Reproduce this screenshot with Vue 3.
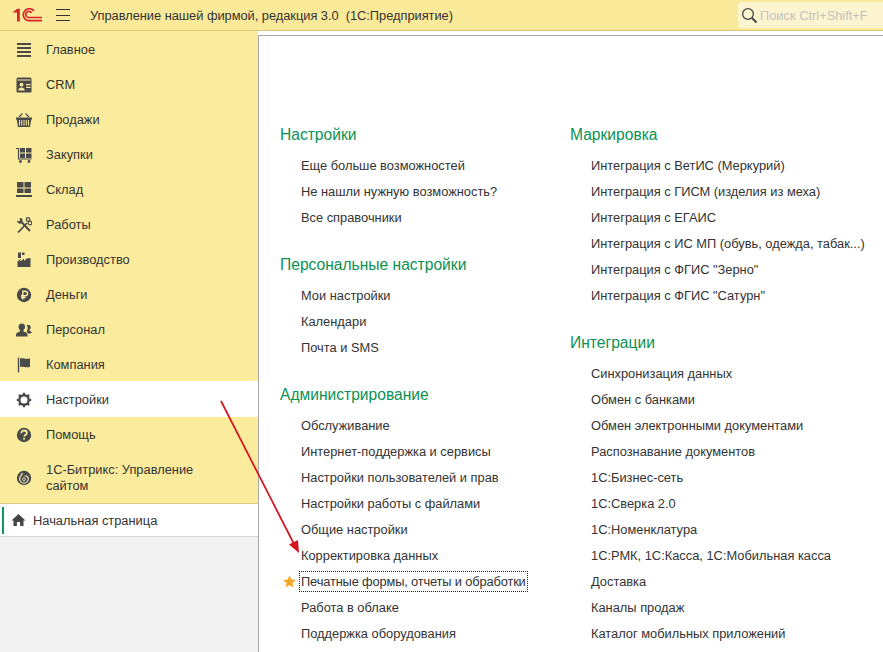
<template>
  <div class="app">
    <header class="topbar">
      <svg class="logo" width="29" height="14" viewBox="0 0 29 14">
        <path d="M0 4 L4.300 .8 H6.800 V13.500 H4 V4.500 H0 Z" fill="#d8232a" />
        <path d="M21 3 A6 6 0 1 0 15.500 12.700 H29" fill="none" stroke="#d8232a" stroke-width="1.700" />
        <path d="M18.500 4.800 A3.100 3.100 0 1 0 15.500 9.500 H29" fill="none" stroke="#d8232a" stroke-width="1.700" />
      </svg>
      <div class="burger"><span></span><span></span><span></span></div>
      <div class="title">Управление нашей фирмой, редакция 3.0&nbsp; (1С:Предприятие)</div>
      <div class="search">
        <svg width="17" height="17" viewBox="0 0 17 17">
          <circle cx="7" cy="7" r="5.400" fill="none" stroke="#444" stroke-width="1.300" />
          <path d="M11 11 L15.500 15.500" stroke="#444" stroke-width="2" />
        </svg>
        <span>Поиск Ctrl+Shift+F</span>
      </div>
    </header>

    <div class="body">
      <aside class="side">
        <nav class="nav">
          <div v-for="item in navItems" :key="item.name" class="nav-item" :class="{ active: item.active, tall: item.tall }">
            <svg class="nav-icon" width="16" height="16" viewBox="0 0 16 16" fill="#4a4a4a" v-html="item.icon"></svg>
            <span class="nav-text">{{ item.name }}</span>
          </div>
        </nav>
        <div class="home-tab">
          <i class="marker"></i>
          <svg width="15" height="12" viewBox="0 0 14 12" fill="#444">
            <path d="M7 0 L14 6.400 H12 V12 H8.600 V8 H5.400 V12 H2 V6.400 H0 Z" />
          </svg>
          <span>Начальная страница</span>
        </div>
      </aside>

      <main class="content">
        <div v-for="(col, i) in columns" :key="i" class="col">
          <section v-for="sec in col" :key="sec.title" class="sec">
            <h2>{{ sec.title }}</h2>
            <div v-for="link in sec.links" :key="link" class="link">
              <svg v-if="link === favorite" class="star" width="13" height="13" viewBox="0 0 13 13">
                <path d="M6.500 .3 L8.300 4.500 L12.900 4.900 L9.400 7.900 L10.500 12.400 L6.500 10 L2.500 12.400 L3.600 7.900 L.1 4.900 L4.700 4.500 Z" fill="#f6a623" />
              </svg>
              <span :class="{ focused: link === favorite }">{{ link }}</span>
            </div>
          </section>
        </div>
      </main>
    </div>

    <svg class="arrow" width="883" height="652" viewBox="0 0 883 652">
      <path d="M221 401 L294 544" stroke="#d5121e" stroke-width="1.700" fill="none" />
      <path d="M299 553 L289 544.500 L298 540 Z" fill="#d5121e" />
    </svg>
  </div>
</template>

<script setup>
const navItems = [
  { name: 'Главное', icon: '<path d="M1 1h14v2H1zM1 5h14v2H1zM1 9h14v2H1zM1 13h14v2H1z"/>' },
  { name: 'CRM', icon: '<path d="M2 .5h12a1.500 1.500 0 0 1 1.500 1.500v12.500a1 1 0 0 1-1 1h-13a1 1 0 0 1-1-1V2A1.500 1.500 0 0 1 2 .5z"/><path d="M1.500 2.500h13v1h-13z" fill="#fbeb9c"/><circle cx="5.500" cy="7.700" r="1.900" fill="#fbeb9c"/><path d="M2.300 13.500c0-2.200 1.600-3 3.200-3s3.200.8 3.200 3zM10 7h4.500v1.200H10zM10 9.800h4.500V11H10z" fill="#fbeb9c"/>' },
  { name: 'Продажи', icon: '<path d="M0 5.500h16v2h-.7L14 15H2L.7 7.500H0z"/><path d="M3.500 8v5.500M5.700 8v5.500M8 8v5.500M10.300 8v5.500M12.500 8v5.500" stroke="#fbeb9c" stroke-width="1"/><path d="M3 5l3.500-3.500M13 5L9.500 1.500" stroke="#4a4a4a" stroke-width="1.100" fill="none"/>' },
  { name: 'Закупки', icon: '<path d="M0 1.500h2.500v10.500h13" fill="none" stroke="#4a4a4a" stroke-width="1.200"/><path d="M4 1h5v4.500H4zM10 1h5.500v4.500H10zM4 6.500h5V11H4zM10 6.500h5.500V11H10z"/><circle cx="4.500" cy="14.500" r="1.400"/><circle cx="13" cy="14.500" r="1.400"/>' },
  { name: 'Склад', icon: '<path d="M1 0h6.500v5.500H1zM8.500 0H15v5.500H8.500zM1 6.500h6.500V11H1zM8.500 6.500H15V11H8.500zM0 13h16v2H0z"/>' },
  { name: 'Работы', icon: '<path d="M5 4.500L14 14" stroke="#4a4a4a" stroke-width="2"/><path d="M1 3.200l1.800 1.300 1.500-1.300-.8-2c1.800-.6 3.600.8 3 3L5 6.500c-2 .6-4.200-1-4-3.300z"/><path d="M11 6L2 15.500" stroke="#4a4a4a" stroke-width="1.700"/><circle cx="12" cy="2.500" r="1.800" fill="none" stroke="#4a4a4a" stroke-width="1.200"/><circle cx="14" cy="6" r="1.800" fill="none" stroke="#4a4a4a" stroke-width="1.200"/>' },
  { name: 'Производство', icon: '<path d="M1.500 15V9.500l3-2.500v2.500L8 6.500v2.500l2.500-2.500L14.500 6v9zM2 .5h3V6H2zM6 .5h2.500V3H6z"/>' },
  { name: 'Деньги', icon: '<circle cx="8" cy="8" r="7.200"/><path d="M6.800 12.500V4.200h2.400a2.300 2.300 0 0 1 0 4.600H5M5 10.500h4.500" fill="none" stroke="#fbeb9c" stroke-width="1.400"/>' },
  { name: 'Персонал', icon: '<path d="M6 1.500c2 0 3.200 1.500 3 3.500-.1 1.300-.7 2.500-1.500 3.200v1.300c2 .6 4 1.300 4 3.500v1.500H0V13c0-2.200 2-2.900 4-3.500V8.200C3.200 7.500 2.600 6.300 2.500 5 2.300 3 4 1.500 6 1.500z"/><path d="M12.500 3c1.500 0 2.300 1.200 2.200 2.500-.1 1-.5 1.800-1.200 2.300v1c.9.400 2 1 2.500 1.700L13 12c-.6-.8-1.400-1.300-2.500-1.700.6-1 1.300-2.800 1.200-4.500-.1-1-.4-2-1-2.400.2-.2.5-.4.800-.4z"/>' },
  { name: 'Компания', icon: '<path d="M1.800 .5h1.400v15H1.800zM4 1.500c3-1 5 1.200 10 0v8.500c-5 1.200-7-1-10 0z"/>' },
  { name: 'Настройки', active: true, icon: '<circle cx="8" cy="8" r="4.700" fill="none" stroke="#4a4a4a" stroke-width="2.400"/><path d="M8 .8v2.400M8 12.800v2.400M.8 8h2.400M12.800 8h2.400M2.900 2.900l1.700 1.700M11.400 11.400l1.700 1.700M2.900 13.100l1.700-1.700M11.400 4.600l1.700-1.700" stroke="#4a4a4a" stroke-width="2.200"/>' },
  { name: 'Помощь', icon: '<circle cx="8" cy="8" r="7.200"/><path d="M5.300 6.200c0-1.800 1.300-2.700 2.800-2.700s2.700.9 2.700 2.400c0 2-2.600 2-2.600 3.700" fill="none" stroke="#fbeb9c" stroke-width="1.800"/><rect x="7.200" y="10.800" width="1.800" height="1.800" fill="#fbeb9c"/>' },
  { name: '1С-Битрикс: Управление сайтом', tall: true, icon: '<circle cx="8" cy="8" r="7.200"/><path d="M6.500 3c-.8 2.500-2.800 3.200-2.800 5.800a4.300 4.300 0 0 0 8.600 0c0-2.300-2-3.300-3.700-2.700" fill="none" stroke="#e6dcae" stroke-width="1.300"/><circle cx="8" cy="9.200" r="1.400" fill="none" stroke="#e6dcae" stroke-width="1"/>' },
]

const favorite = 'Печатные формы, отчеты и обработки'

const columns = [
  [
    { title: 'Настройки', links: ['Еще больше возможностей', 'Не нашли нужную возможность?', 'Все справочники'] },
    { title: 'Персональные настройки', links: ['Мои настройки', 'Календари', 'Почта и SMS'] },
    {
      title: 'Администрирование',
      links: [
        'Обслуживание',
        'Интернет-поддержка и сервисы',
        'Настройки пользователей и прав',
        'Настройки работы с файлами',
        'Общие настройки',
        'Корректировка данных',
        favorite,
        'Работа в облаке',
        'Поддержка оборудования',
      ],
    },
  ],
  [
    {
      title: 'Маркировка',
      links: [
        'Интеграция с ВетИС (Меркурий)',
        'Интеграция с ГИСМ (изделия из меха)',
        'Интеграция с ЕГАИС',
        'Интеграция с ИС МП (обувь, одежда, табак...)',
        'Интеграция с ФГИС "Зерно"',
        'Интеграция с ФГИС "Сатурн"',
      ],
    },
    {
      title: 'Интеграции',
      links: [
        'Синхронизация данных',
        'Обмен с банками',
        'Обмен электронными документами',
        'Распознавание документов',
        '1С:Бизнес-сеть',
        '1С:Сверка 2.0',
        '1С:Номенклатура',
        '1С:РМК, 1С:Касса, 1С:Мобильная касса',
        'Доставка',
        'Каналы продаж',
        'Каталог мобильных приложений',
      ],
    },
  ],
]
</script>

<style>
html,
body {
  margin: 0;
  overflow: hidden;
}
</style>

<style scoped>
.app {
  position: relative;
  width: 883px;
  height: 652px;
  overflow: hidden;
  display: flex;
  flex-direction: column;
  background: #fff;
  font-family: "Liberation Sans", Arial, sans-serif;
  font-size: 12.85px;
  color: #333;
}

.topbar {
  height: 30px;
  flex: none;
  display: flex;
  align-items: center;
  background: #fbe99a;
  border-bottom: 1px solid #d9c67a;
}

.logo {
  margin-left: 13px;
  flex: none;
}

.burger {
  margin-left: 14px;
  width: 14px;
  height: 12px;
  display: flex;
  flex-direction: column;
  justify-content: space-between;
  flex: none;
}

.burger span {
  height: 1px;
  background: #333;
}

.title {
  margin-left: 20px;
  flex: 1;
  letter-spacing: -0.03px;
  white-space: nowrap;
}

.search {
  width: 145px;
  height: 26px;
  box-sizing: border-box;
  padding-left: 3px;
  display: flex;
  align-items: center;
  gap: 2px;
  background: #fdf5d0;
  border-radius: 3px 0 0 3px;
  color: #c4c0bc;
  white-space: nowrap;
}

.body {
  flex: 1;
  display: flex;
  min-height: 0;
}

.side {
  width: 258px;
  flex: none;
  display: flex;
  flex-direction: column;
  background: #f2f2f2;
}

.nav {
  background: #fbeb9c;
  padding-top: 1px;
  border-bottom: 1px solid #d8c88a;
}

.nav-item {
  height: 35px;
  display: flex;
  align-items: center;
  padding-left: 16px;
}

.nav-item.active {
  height: 35px;
  margin-top: -1px;
  padding-top: 1px;
  background: #fff;
}

.nav-item.tall {
  height: 51px;
}

.nav-icon {
  flex: none;
  margin-right: 14px;
}

.nav-text {
  width: 170px;
  line-height: 16px;
}

.home-tab {
  height: 32px;
  display: flex;
  align-items: center;
  background: #fff;
  border-bottom: 1px solid #d6d6d6;
  padding-left: 2px;
}

.marker {
  width: 2px;
  height: 27px;
  margin-right: 7px;
  background: #0d9a5b;
}

.home-tab span {
  margin-left: 7px;
}

.content {
  flex: 1;
  display: flex;
  margin-top: 4px;
  padding: 87px 0 0 21px;
  border-top: 1px solid #a8a8a8;
  border-left: 1px solid #a8a8a8;
  white-space: nowrap;
}

.col {
  width: 290px;
}

.sec {
  margin-bottom: 22px;
}

h2 {
  margin: 0 0 7px;
  font-size: 15.6px;
  font-weight: 400;
  line-height: 23px;
  color: #0c9152;
}

.link {
  position: relative;
  height: 26px;
  line-height: 26px;
  padding-left: 21px;
}

.focused {
  outline: 1px dotted #222;
  padding: 2px 1px;
  margin-left: -1px;
  letter-spacing: -0.15px;
}

.star {
  position: absolute;
  left: 3px;
  top: 6px;
}

.arrow {
  position: absolute;
  left: 0;
  top: 0;
  pointer-events: none;
}
</style>
